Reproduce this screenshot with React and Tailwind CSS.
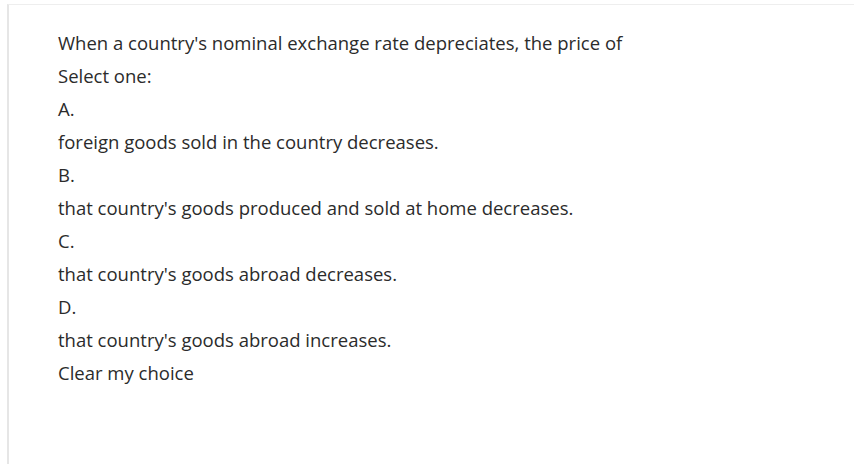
export default function App() {
  const options = [
    ["A.", "foreign goods sold in the country decreases."],
    ["B.", "that country's goods produced and sold at home decreases."],
    ["C.", "that country's goods abroad decreases."],
    ["D.", "that country's goods abroad increases."],
  ];

  return (
    <div className="h-[464px] w-[854px] overflow-hidden bg-white">
      <div className="ml-[7px] mt-[4px] h-full border-l-2 border-t border-l-[#e6e6e6] border-t-[#eeeeee] pl-[49px] pt-[21px] font-['Open_Sans',sans-serif] text-[18.5px] leading-[33px] text-[#2b2b2b]">
        <p>When a country's nominal exchange rate depreciates, the price of</p>
        <p>Select one:</p>
        {options.map(([letter, text]) => (
          <div key={letter}>
            <p>{letter}</p>
            <p>{text}</p>
          </div>
        ))}
        <p>Clear my choice</p>
      </div>
    </div>
  );
}
